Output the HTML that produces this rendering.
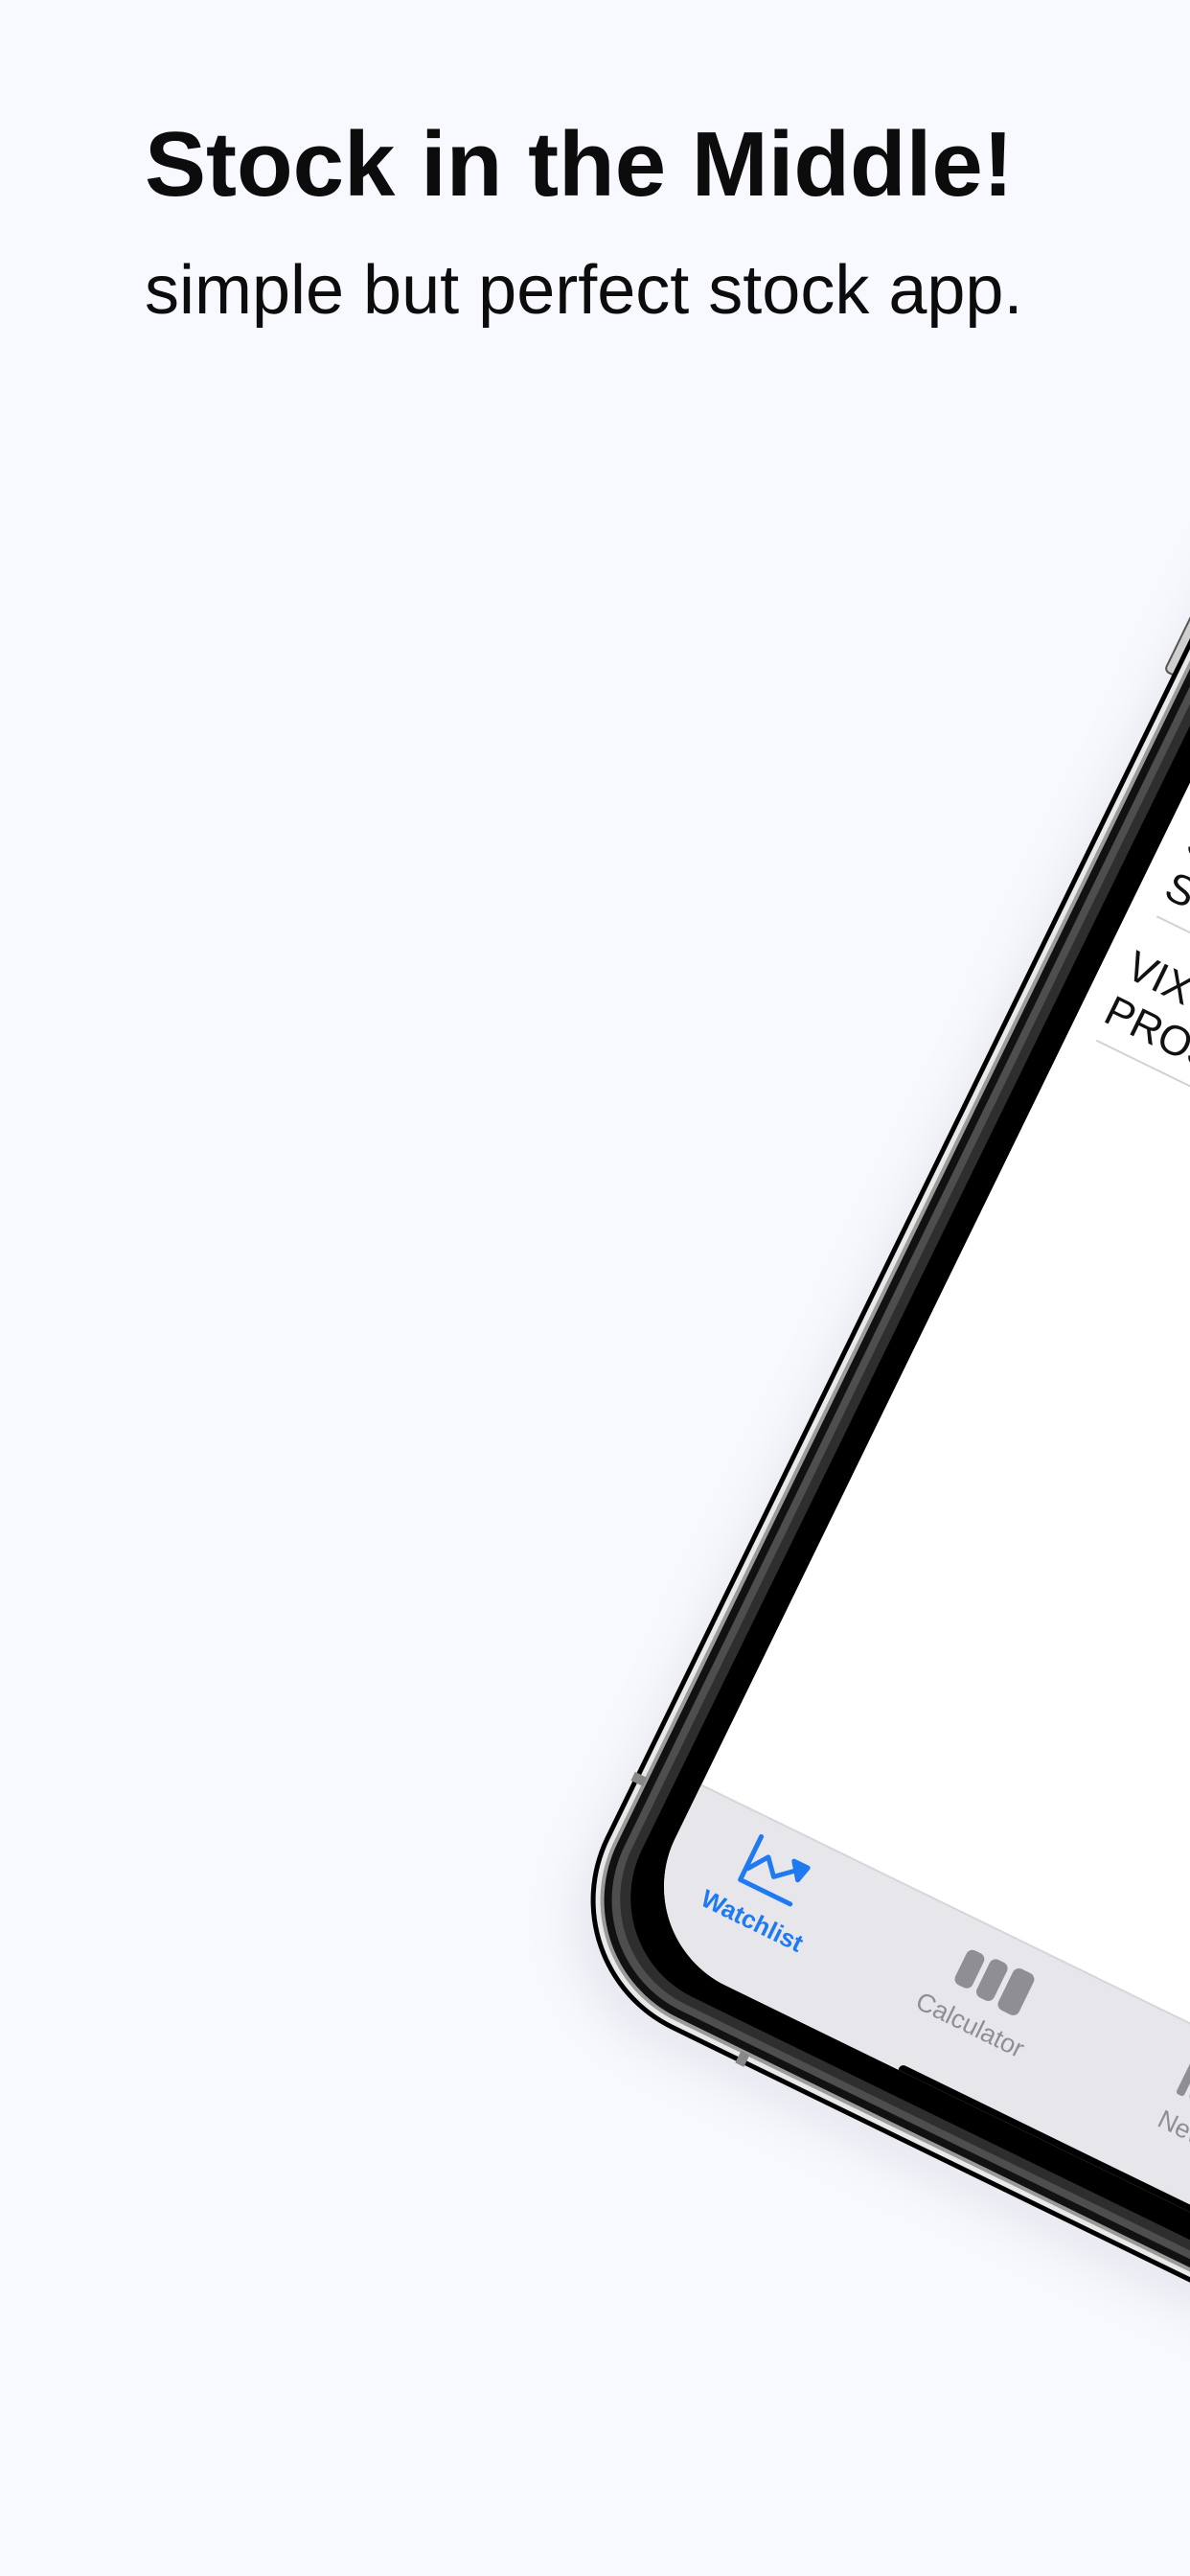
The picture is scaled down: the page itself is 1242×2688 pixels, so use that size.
<!DOCTYPE html>
<html><head><meta charset="utf-8"><style>
html,body{margin:0;padding:0;background:#f8f9fe;}
body{width:1242px;height:2688px;overflow:hidden;position:relative;}
svg{position:absolute;left:0;top:0;}
</style></head><body>
<svg width="1242" height="2688" viewBox="0 0 1242 2688" xmlns="http://www.w3.org/2000/svg">
<defs>
  <filter id="sh" x="-50%" y="-50%" width="200%" height="200%">
    <feGaussianBlur stdDeviation="22"/>
  </filter>
  <clipPath id="scr"><rect x="66" y="-1934" width="992" height="1868" rx="115"/></clipPath>
</defs>
<rect width="1242" height="2688" fill="#f8f9fe"/>
<text x="151" y="204" font-family="Liberation Sans, sans-serif" font-weight="bold" font-size="96" fill="#0c0c0c">Stock in the Middle!</text>
<text x="151" y="327" font-family="Liberation Sans, sans-serif" font-size="72" fill="#0c0c0c">simple but perfect stock app.</text>

<g transform="translate(566,2052) rotate(26)">
  <!-- shadow -->
  <rect x="0" y="-1990" width="1124" height="2000" rx="150" fill="#a0a4b4" opacity="0.18" filter="url(#sh)" transform="translate(-10,18)"/>
  <!-- side button -->
  <rect x="-9" y="-1800" width="16" height="300" rx="5" fill="#cfcfcf" stroke="#555" stroke-width="2"/>
  <!-- frame layers -->
  <rect x="0" y="-2000" width="1124" height="2000" rx="150" fill="#000"/>
  <rect x="5" y="-1995" width="1114" height="1990" rx="145" fill="#e9e9e9"/>
  <rect x="10" y="-1990" width="1104" height="1980" rx="140" fill="#9a9a9a"/>
  <rect x="14" y="-1986" width="1096" height="1972" rx="136" fill="#111"/>
  <rect x="22" y="-1978" width="1080" height="1956" rx="128" fill="#4e4e4e"/>
  <rect x="30" y="-1970" width="1064" height="1940" rx="122" fill="#2e2e2e"/>
  <rect x="40" y="-1960" width="1044" height="1920" rx="115" fill="#000"/>
  <!-- antenna marks -->
  <rect x="-2" y="-225" width="14" height="10" fill="#888"/>
  <rect x="225" y="-12" width="10" height="14" fill="#888"/>
  <!-- screen -->
  <g clip-path="url(#scr)">
    <rect x="66" y="-1934" width="992" height="1868" fill="#fff"/>
    <line x1="96" y1="-1410" x2="1062" y2="-1410" stroke="#d2d2d6" stroke-width="2"/>
    <text x="92" y="-1339" font-family="Liberation Sans, sans-serif" font-size="44" fill="#111">SPY</text>
    <text x="92" y="-1287" font-family="Liberation Sans, sans-serif" font-size="44" fill="#111">SPDR S&amp;P 500 ETF</text>
    <line x1="96" y1="-1266" x2="1062" y2="-1266" stroke="#d2d2d6" stroke-width="2"/>
    <text x="92" y="-1195" font-family="Liberation Sans, sans-serif" font-size="44" fill="#111">VIXY</text>
    <text x="92" y="-1143" font-family="Liberation Sans, sans-serif" font-size="44" fill="#111">PROSHARES VIX SHORT-TERM</text>
    <line x1="96" y1="-1122" x2="1062" y2="-1122" stroke="#d2d2d6" stroke-width="2"/>
    <!-- tab bar -->
    <rect x="62" y="-243" width="1000" height="200" fill="#e6e6eb"/>
    <line x1="62" y1="-243" x2="1062" y2="-243" stroke="#d6d6da" stroke-width="2"/>
    <g transform="translate(174,-196)" fill="none" stroke="#1f7af2" stroke-width="5" stroke-linecap="round" stroke-linejoin="round">
      <path d="M-28,-26 L-28,24 L30,24"/>
      <path d="M-26,10 L-12,-10 L2,6 L20,-10"/>
      <path d="M14,-18 L30,-18 L26,-2 Z" fill="#1f7af2"/>
    </g>
    <text x="176" y="-130" text-anchor="middle" font-family="Liberation Sans, sans-serif" font-weight="bold" font-size="26" fill="#1f7af2">Watchlist</text>
    <g transform="translate(430,-193)" fill="#8e8e93">
      <rect x="-38" y="-20" width="20" height="40" rx="7"/>
      <rect x="-12" y="-22" width="20" height="44" rx="7"/>
      <rect x="14" y="-24" width="24" height="48" rx="7"/>
    </g>
    <text x="428" y="-132" text-anchor="middle" font-family="Liberation Sans, sans-serif" font-size="27" fill="#8e8e93">Calculator</text>
    <g transform="translate(682,-193)" fill="#8e8e93">
      <rect x="-30" y="-22" width="9" height="44" rx="3"/>
      <rect x="-16" y="-22" width="46" height="44" rx="6"/>
    </g>
    <text x="682" y="-132" text-anchor="middle" font-family="Liberation Sans, sans-serif" font-size="27" fill="#8e8e93">News</text>
    <rect x="381" y="-73" width="340" height="10" rx="5" fill="#000"/>
  </g>
</g>
</svg>
</body></html>
